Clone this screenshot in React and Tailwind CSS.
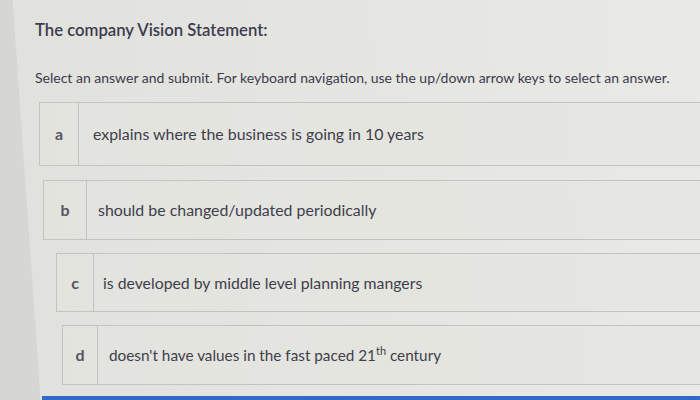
const options = [
  { key: 'a', text: 'explains where the business is going in 10 years', row: 'ml-[4px] h-[64px] mb-[14px]', cell: 'w-[39px]', pad: 'pl-[14px] text-[15.9px]' },
  { key: 'b', text: 'should be changed/updated periodically', row: 'ml-[8px] h-[60px] mb-[13px]', cell: 'w-[43px]', pad: 'pl-[11px] text-[15.9px]' },
  { key: 'c', text: 'is developed by middle level planning mangers', row: 'ml-[21px] h-[59px] mb-[13px]', cell: 'w-[37px]', pad: 'pl-[9px] text-[15.8px]' },
  { key: 'd', text: null, row: 'ml-[27px] h-[60px]', cell: 'w-[35px]', pad: 'pl-[11px] text-[15.3px]' },
];

export default function App() {
  return (
    <main
      className="w-[700px] h-[400px] overflow-hidden flex flex-col pl-[35px] bg-[linear-gradient(86deg,#d6d6d2_0,#d6d6d2_40px,#e1e1dd_41px,#e9e9e6_100%)] text-[#3b3c4e]"
      style={{ fontFamily: 'Lato, "Noto Sans", sans-serif' }}
    >
      <h1 className="mt-[18px] h-[24px] text-[16.7px] leading-[24px] font-semibold whitespace-nowrap">
        The company Vision Statement:
      </h1>
      <p className="mt-[26px] h-[20px] text-[14px] leading-[20px] whitespace-nowrap">
        Select an answer and submit. For keyboard navigation, use the up/down arrow keys to select an answer.
      </p>

      <div className="mt-[14px] flex flex-col">
        {options.map((o) => (
          <div
            key={o.key}
            className={`${o.row} w-[700px] flex shrink-0 border border-[#c3c3bf] bg-[#e4e4e0]/60`}
          >
            <div className={`${o.cell} shrink-0 flex items-center justify-center border-r border-[#c3c3bf] text-[16px] font-bold text-[#55565f]`}>
              {o.key}
            </div>
            <div className={`${o.pad} flex items-center whitespace-nowrap text-[#3e3f4a]`}>
              {o.text ?? (
                <span>
                  doesn't have values in the fast paced 21<sup className="text-[11px]">th</sup> century
                </span>
              )}
            </div>
          </div>
        ))}
      </div>

      <div className="mt-[11px] ml-[7px] h-[4px] w-[700px] shrink-0 bg-[#2f6bc4]" />
    </main>
  );
}
